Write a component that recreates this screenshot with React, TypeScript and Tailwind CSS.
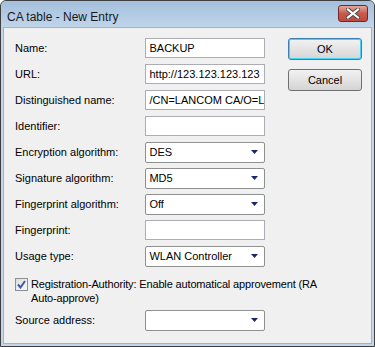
import React from "react";

const font = { fontFamily: '"Liberation Sans", Arial, sans-serif' };

function TextBox({ value = "" }: { value?: string }) {
  return (
    <div className="h-[20px] w-[120px] border border-[#abadb3] bg-white pl-[3px] text-[11px] leading-[18px] text-black overflow-hidden whitespace-nowrap">
      {value}
    </div>
  );
}

function Combo({ value = "" }: { value?: string }) {
  return (
    <div className="h-[21px] w-[120px] rounded-[2px] border border-[#8e8f8f] bg-white pl-[3px] pr-[6px] flex items-center justify-between text-[11px] text-black">
      <span className="whitespace-nowrap overflow-hidden">{value}</span>
      <svg width="7" height="4" viewBox="0 0 7 4">
        <path d="M0 0 H7 L3.5 4 Z" fill="#1c2766" />
      </svg>
    </div>
  );
}

function Row({ label, children }: { label: string; children: React.ReactNode }) {
  return (
    <div className="flex items-center h-[20px]">
      <div className="w-[131px] text-[11px] text-black">{label}</div>
      {children}
    </div>
  );
}

export default function App() {
  return (
    <div
      className="w-[375px] h-[347px] flex flex-col border border-[#3f3f3f] rounded-t-[6px] bg-[#c2d6eb] px-[2px] pb-[2px] overflow-hidden"
      style={font}
    >
      {/* title bar */}
      <div className="h-[26px] flex items-start justify-between bg-gradient-to-b from-[#a4bfdc] to-[#c0d5ea] -mx-[2px] px-[6px] rounded-t-[5px]">
        <span className="text-[12px] text-[#1a1a1a] mt-[7px]">CA table - New Entry</span>
        <button className="mt-[4px] w-[30px] h-[17px] rounded-[3px] border border-[#6e2a25] bg-gradient-to-b from-[#e8a899] via-[#c85a4c] to-[#c2473a] flex items-center justify-center">
          <svg width="14" height="11" viewBox="0 0 14 11">
            <path d="M2 1.5 L12 9.5 M12 1.5 L2 9.5" stroke="#4a4a4a" strokeWidth="4" strokeLinecap="square" />
            <path d="M2 1.5 L12 9.5 M12 1.5 L2 9.5" stroke="#ffffff" strokeWidth="2.2" strokeLinecap="square" />
          </svg>
        </button>
      </div>

      {/* content */}
      <div className="flex-1 border border-[#9fb3c9] bg-[#f0f0f0] pl-[11px] pt-[10px] pr-[10px] flex">
        <div className="flex flex-col w-[250px]">
          <div className="flex flex-col gap-[6px]">
            <Row label="Name:"><TextBox value="BACKUP" /></Row>
            <Row label="URL:"><TextBox value="http://123.123.123.123" /></Row>
            <Row label="Distinguished name:"><TextBox value="/CN=LANCOM CA/O=L" /></Row>
            <Row label="Identifier:"><TextBox /></Row>
            <Row label="Encryption algorithm:"><Combo value="DES" /></Row>
            <Row label="Signature algorithm:"><Combo value="MD5" /></Row>
            <Row label="Fingerprint algorithm:"><Combo value="Off" /></Row>
            <Row label="Fingerprint:"><TextBox /></Row>
            <Row label="Usage type:"><Combo value="WLAN Controller" /></Row>
          </div>

          <div className="flex items-start mt-[11px] whitespace-nowrap">
            <div className="mt-[1px] w-[13px] h-[13px] border border-[#8f8f8f] bg-gradient-to-br from-[#dcdcdc] to-[#fbfbfb] flex items-center justify-center shrink-0">
              <svg width="9" height="9" viewBox="0 0 9 9">
                <path d="M1 4.5 L3.5 7.5 L8 1" stroke="#3d5da8" strokeWidth="2" fill="none" />
              </svg>
            </div>
            <div className="ml-[3px] text-[11px] leading-[14px] tracking-[-0.15px] text-black">
              Registration-Authority: Enable automatical approvement (RA
              <br />
              Auto-approve)
            </div>
          </div>

          <div className="mt-[5px]">
            <Row label="Source address:"><Combo /></Row>
          </div>
        </div>

        <div className="ml-[23px] flex flex-col gap-[9px]">
          <button className="w-[74px] h-[22px] rounded-[3px] border border-[#3c7fb1] bg-gradient-to-b from-[#f2f2f2] to-[#d6d6d6] shadow-[inset_0_0_0_1px_#48d2f8] text-[11px] text-black">
            OK
          </button>
          <button className="w-[74px] h-[22px] rounded-[3px] border border-[#707070] bg-gradient-to-b from-[#f2f2f2] to-[#d4d4d4] text-[11px] text-black">
            Cancel
          </button>
        </div>
      </div>
    </div>
  );
}
